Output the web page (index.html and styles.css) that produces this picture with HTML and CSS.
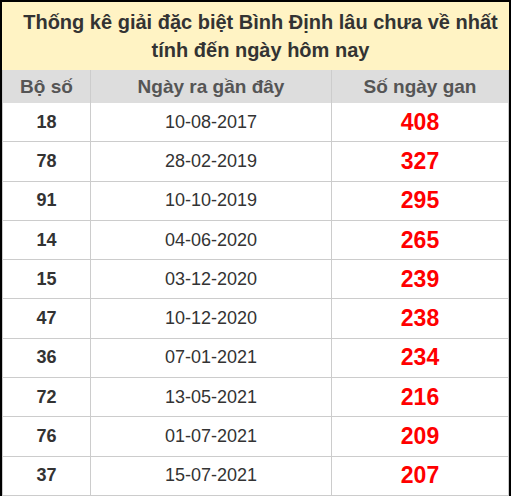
FILE: index.html
```html
<!DOCTYPE html>
<html lang="vi">
<head>
<meta charset="utf-8">
<title>Thống kê giải đặc biệt Bình Định</title>
<link rel="stylesheet" href="styles.css">
</head>
<body>
<div class="frame">
  <table class="gan">
    <caption class="title">Thống kê giải đặc biệt Bình Định lâu chưa về nhất<br>tính đến ngày hôm nay</caption>
    <thead>
      <tr><th class="c1">Bộ số</th><th class="c2">Ngày ra gần đây</th><th class="c3">Số ngày gan</th></tr>
    </thead>
    <tbody>
      <tr><td class="num">18</td><td class="date">10-08-2017</td><td class="days">408</td></tr>
      <tr><td class="num">78</td><td class="date">28-02-2019</td><td class="days">327</td></tr>
      <tr><td class="num">91</td><td class="date">10-10-2019</td><td class="days">295</td></tr>
      <tr><td class="num">14</td><td class="date">04-06-2020</td><td class="days">265</td></tr>
      <tr><td class="num">15</td><td class="date">03-12-2020</td><td class="days">239</td></tr>
      <tr><td class="num">47</td><td class="date">10-12-2020</td><td class="days">238</td></tr>
      <tr><td class="num">36</td><td class="date">07-01-2021</td><td class="days">234</td></tr>
      <tr><td class="num">72</td><td class="date">13-05-2021</td><td class="days">216</td></tr>
      <tr><td class="num">76</td><td class="date">01-07-2021</td><td class="days">209</td></tr>
      <tr><td class="num">37</td><td class="date">15-07-2021</td><td class="days">207</td></tr>
    </tbody>
  </table>
</div>
</body>
</html>
```
FILE: styles.css
```css
html, body {
  margin: 0;
  padding: 0;
  background: #000;
}
body {
  width: 511px;
  height: 496px;
  overflow: hidden;
  font-family: "Liberation Sans", Arial, sans-serif;
}
.frame {
  padding: 2px 3px 2px 2px;
}
.gan {
  width: 506px;
  border-collapse: collapse;
  background: #fff;
  table-layout: fixed;
}
.title {
  background: #fff3c4;
  color: #333;
  font-weight: bold;
  font-size: 20px;
  line-height: 28px;
  padding: 6px 0 6px 10px;
  height: 56px;
  text-align: center;
}
.gan th {
  background: #dddddd;
  color: #555;
  font-weight: bold;
  font-size: 19px;
  height: 33px;
  padding: 0;
  border-left: 1px solid #ccc;
  border-right: 1px solid #ccc;
  box-sizing: border-box;
}
.c1 { width: 88px; }
.c2 { width: 241px; }
.c3 { width: 177px; }
.gan td {
  height: 38.3px;
  padding: 0;
  text-align: center;
  border: 1px solid #ccc;
  color: #333;
}
.gan tr:first-child td { border-top: none; }
.num {
  font-weight: bold;
  font-size: 18px;
}
.date {
  font-size: 18px;
}
.days {
  color: #ff0000 !important;
  font-weight: bold;
  font-size: 23px;
}
```
